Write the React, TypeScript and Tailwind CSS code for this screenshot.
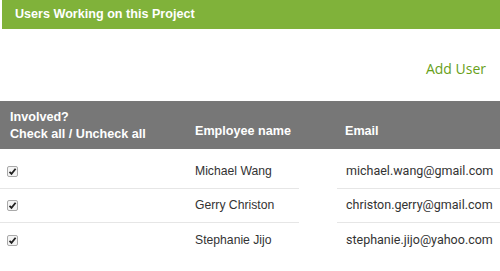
const users = [
  { name: "Michael Wang", email: "michael.wang@gmail.com" },
  { name: "Gerry Christon", email: "christon.gerry@gmail.com" },
  { name: "Stephanie Jijo", email: "stephanie.jijo@yahoo.com" },
];

function Check() {
  return (
    <span className="flex h-[11px] w-[11px] items-center justify-center rounded-[2px] border border-[#a9a9a9] bg-[#f4f4f4]">
      <svg width="9" height="9" viewBox="0 0 9 9" fill="none">
        <path d="M1.5 4.8 L3.5 6.8 L7.6 1.8" stroke="#222" strokeWidth="1.8" />
      </svg>
    </span>
  );
}

export default function App() {
  return (
    <div className="h-[271px] w-[500px] overflow-hidden bg-white font-['Liberation_Sans',Arial,sans-serif]">
      <div className="ml-[2px] flex h-[29px] items-center bg-[#80b23a] pl-[13px] text-[12.6px] font-bold text-white">
        Users Working on this Project
      </div>

      <div className="flex h-[72px] items-center justify-end pr-[14px] pt-[6px]">
        <a className="font-['Open_Sans',sans-serif] text-[14px] text-[#67a01a]">
          Add User
        </a>
      </div>

      <div className="flex h-[48px] bg-[#777777] text-[12.6px] font-bold leading-[17px] text-white">
        <div className="flex w-[180px] flex-col justify-center pl-[10px] pt-[1px]">
          <span>Involved?</span>
          <span>Check all / Uncheck all</span>
        </div>
        <div className="flex w-[157px] items-end pb-[9px] pl-[15px]">Employee name</div>
        <div className="flex flex-1 items-end pb-[9px] pl-[8px]">Email</div>
      </div>

      <div className="mt-[6px] text-[#333]">
        {users.map((u, i) => (
          <div key={u.email} className="flex h-[34px] items-center">
            <div className={`flex h-full w-[299px] items-center ${i < 2 ? "border-b border-[#e6e6e6]" : ""}`}>
              <div className="w-[180px] pl-[7px]">
                <Check />
              </div>
              <div className="pl-[15px] text-[12.2px]">{u.name}</div>
            </div>
            <div className="w-[38px]" />
            <div className={`flex h-full flex-1 items-center pl-[9px] font-['Roboto',sans-serif] text-[12.5px] ${i < 2 ? "border-b border-[#e6e6e6]" : ""}`}>
              {u.email}
            </div>
          </div>
        ))}
      </div>
    </div>
  );
}
